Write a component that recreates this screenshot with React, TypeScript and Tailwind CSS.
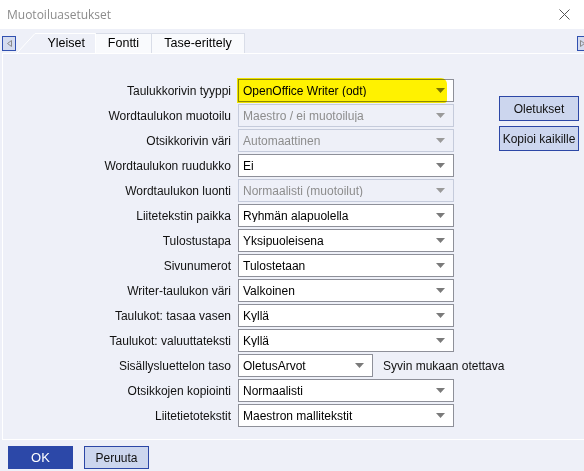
import React from "react";

type Row = { label: string; value: string; disabled?: boolean; highlight?: boolean; narrow?: boolean; extra?: string };

const rows: Row[] = [
  { label: "Taulukkorivin tyyppi", value: "OpenOffice Writer (odt)", highlight: true },
  { label: "Wordtaulukon muotoilu", value: "Maestro / ei muotoiluja", disabled: true },
  { label: "Otsikkorivin väri", value: "Automaattinen", disabled: true },
  { label: "Wordtaulukon ruudukko", value: "Ei" },
  { label: "Wordtaulukon luonti", value: "Normaalisti (muotoilut)", disabled: true },
  { label: "Liitetekstin paikka", value: "Ryhmän alapuolella" },
  { label: "Tulostustapa", value: "Yksipuoleisena" },
  { label: "Sivunumerot", value: "Tulostetaan" },
  { label: "Writer-taulukon väri", value: "Valkoinen" },
  { label: "Taulukot: tasaa vasen", value: "Kyllä" },
  { label: "Taulukot: valuuttateksti", value: "Kyllä" },
  { label: "Sisällysluettelon taso", value: "OletusArvot", narrow: true, extra: "Syvin mukaan otettava" },
  { label: "Otsikkojen kopiointi", value: "Normaalisti" },
  { label: "Liitetietotekstit", value: "Maestron mallitekstit" },
];

function Arrow({ disabled }: { disabled?: boolean }) {
  return (
    <svg width="9" height="5" viewBox="0 0 9 5" className="shrink-0">
      <path d="M0 0 H9 L4.5 5 Z" fill={disabled ? "#9a9a9a" : "#7a7a7a"} />
    </svg>
  );
}

function Select({ row }: { row: Row }) {
  const base = row.narrow ? "w-[135px]" : "w-[216px]";
  const style = row.disabled
    ? "border-[#c5cbdb] bg-[#eef0f8] text-[#8d8d8d]"
    : "border-[#8e9099] bg-white text-black";
  return (
    <div className={`relative shrink-0 ${base} h-[23px] border ${style} flex items-center pl-[4px] pr-[8px]`}>
      <span className="flex-1 truncate leading-none">{row.value}</span>
      <Arrow disabled={row.disabled} />
      {row.highlight && (
        <div className="absolute left-[-2px] top-[-2px] w-[210px] h-[25px] bg-[#fff200] mix-blend-multiply rounded-tr-[6px] rounded-br-[3px]" />
      )}
    </div>
  );
}

export default function App() {
  return (
    <div
      className="w-[584px] h-[471px] bg-[#eef0f8] flex flex-col overflow-hidden text-[12px]"
      style={{ fontFamily: '"Liberation Sans", Arial, sans-serif' }}
    >
      {/* title bar */}
      <div className="h-[29px] bg-white flex items-center justify-between pl-[7px] pr-[14px] shrink-0">
        <span className="text-[12px] text-[#8b8b8b]" style={{ fontFamily: '"Open Sans", "Noto Sans", sans-serif' }}>
          Muotoiluasetukset
        </span>
        <svg width="11" height="11" viewBox="0 0 11 11">
          <path d="M0.5 0.5 L10.5 10.5 M10.5 0.5 L0.5 10.5" stroke="#555" strokeWidth="1" />
        </svg>
      </div>

      {/* tab strip */}
      <div className="h-[24px] shrink-0 flex items-end relative">
        <div className="absolute left-[2px] top-[7px] w-[14px] h-[15px] border border-[#3050b0] bg-[#d5dcef] flex items-center justify-center">
          <svg width="5" height="7" viewBox="0 0 5 7">
            <path d="M4.5 0.5 L0.5 3.5 L4.5 6.5 Z" fill="none" stroke="#8a8a8a" strokeWidth="1" />
          </svg>
        </div>
        <div className="absolute right-[-7px] top-[7px] w-[14px] h-[15px] border border-[#3050b0] bg-[#d5dcef] flex items-center pl-[2px]">
          <svg width="5" height="7" viewBox="0 0 5 7">
            <path d="M0.5 0.5 L4.5 3.5 L0.5 6.5 Z" fill="none" stroke="#8a8a8a" strokeWidth="1" />
          </svg>
        </div>
        <div className="ml-[17px] flex items-end h-[20px]">
          <div className="relative w-[79px] h-[20px] flex items-center justify-end pr-[11px] text-[12.5px] text-black">
            <svg className="absolute left-0 top-0" width="79" height="20" viewBox="0 0 79 20">
              <path d="M0 20 L18 0.5 H78.5 V20" fill="#eef0f8" stroke="#ffffff" strokeWidth="1" />
            </svg>
            <span className="relative">Yleiset</span>
          </div>
          <div className="w-[56px] h-[20px] bg-[#f9fafd] border-t border-r border-[#d9dde8] flex items-center justify-center text-[12.5px] text-black">
            Fontti
          </div>
          <div className="w-[93px] h-[20px] bg-[#f9fafd] border-t border-r border-[#d9dde8] flex items-center justify-center text-[12.5px] text-black">
            Tase-erittely
          </div>
        </div>
      </div>

      {/* panel */}
      <div className="ml-[2px] h-[387px] shrink-0 border-l border-t border-b border-white flex pt-[25px]">
        <div className="w-[451px] shrink-0 flex flex-col gap-[2px]">
          {rows.map((r) => (
            <div key={r.label} className="flex items-center h-[23px]">
              <div className="w-[235px] shrink-0 text-right text-[#111] pr-[7px] whitespace-nowrap">{r.label}</div>
              <Select row={r} />
              {r.extra && <span className="ml-[10px] text-[#111] whitespace-nowrap">{r.extra}</span>}
            </div>
          ))}
        </div>
        <div className="ml-[45px] mt-[17px] flex flex-col gap-[5px]">
          <button className="w-[80px] h-[25px] bg-[#ccd6ee] border border-[#2c47a6] text-[#111] text-[12px] whitespace-nowrap">
            Oletukset
          </button>
          <button className="w-[80px] h-[25px] bg-[#ccd6ee] border border-[#2c47a6] text-[#111] text-[12px] whitespace-nowrap">
            Kopioi kaikille
          </button>
        </div>
      </div>

      {/* footer */}
      <div className="flex gap-[11px] pl-[8px] pt-[6px]">
        <button className="w-[65px] h-[23px] bg-[#2c48a8] text-white text-[13px]">OK</button>
        <button className="w-[65px] h-[23px] bg-[#ccd6ee] border border-[#2c47a6] text-[#111] text-[12px]">
          Peruuta
        </button>
      </div>
    </div>
  );
}
